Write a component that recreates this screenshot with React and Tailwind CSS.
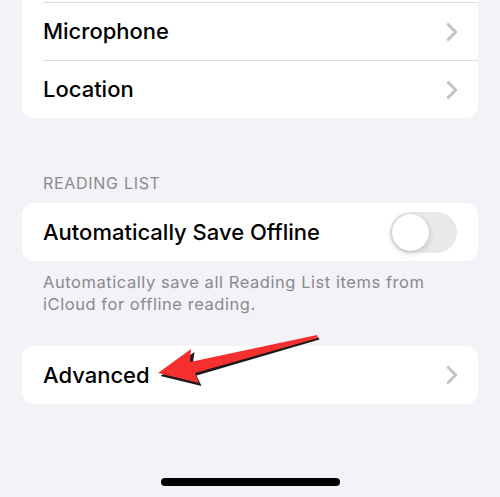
import { ChevronRight } from "lucide-react";

const Row = ({ label, first, chevron = true, children }) => {
  return (
    <div className="flex h-[58px] items-center pl-[21px]">
      <div
        className={
          "flex h-full flex-1 items-center pr-[22px] " +
          (first ? "" : "border-t border-[#dcdcdf]")
        }
      >
        <span className="flex-1 text-[22px] font-medium tracking-[0px] text-black">
          {label}
        </span>
        {chevron && (
          <ChevronRight
            className="-mr-[11px] h-[30px] w-[30px] text-[#c4c4c7]"
            strokeWidth={2.5}
          />
        )}
        {children}
      </div>
    </div>
  );
};

const Toggle = () => {
  return (
    <div className="-mr-[1px] flex h-[41px] w-[67px] items-center rounded-full bg-[#e9e9eb] p-[2px]">
      <div className="h-[37px] w-[37px] rounded-full bg-white shadow-[0_2px_6px_rgba(0,0,0,0.18),0_0_1px_rgba(0,0,0,0.15)]" />
    </div>
  );
};

const Arrow = () => {
  return (
    <svg
      className="pointer-events-none absolute left-0 top-0"
      width="500"
      height="497"
      viewBox="0 0 500 497"
    >
      <polygon
        points="318,338 195,374 200,384.5 159,374.5 193,350.5 191,364 317,336"
        fill="#1a1a1a"
        transform="translate(1.5,1.5)"
      />
      <polygon
        points="318,338 195,373 199,383 158,373 191,349 190,362 317,335"
        fill="#f5302f"
      />
    </svg>
  );
};

export default function App() {
  return (
    <div
      className="relative h-[497px] w-[500px] overflow-hidden bg-[#f2f2f7]"
      style={{ fontFamily: "Inter, 'Noto Sans', sans-serif" }}
    >
      <div className="mx-[22px] -mt-[56px] overflow-hidden rounded-[12px] bg-white">
        <div className="h-[58px]" />
        <Row label="Microphone" />
        <Row label="Location" />
      </div>

      <div className="mt-[56px] pl-[43px] text-[16px] leading-[18px] tracking-[0.7px] text-[#8a8a8e]">
        READING LIST
      </div>

      <div className="mx-[22px] mt-[11px] rounded-[12px] bg-white">
        <Row label="Automatically Save Offline" first chevron={false}>
          <Toggle />
        </Row>
      </div>

      <div className="mt-[10px] pl-[43px] pr-[20px] text-[16.5px] leading-[22px] tracking-[0.55px] text-[#8a8a8e]">
        Automatically save all Reading List items from
        <br />
        iCloud for offline reading.
      </div>

      <div className="mx-[22px] mt-[31px] rounded-[12px] bg-white">
        <Row label="Advanced" first />
      </div>

      <div className="mt-[74px] flex justify-center">
        <div className="h-[8px] w-[179px] rounded-full bg-black" />
      </div>

      <Arrow />
    </div>
  );
}
